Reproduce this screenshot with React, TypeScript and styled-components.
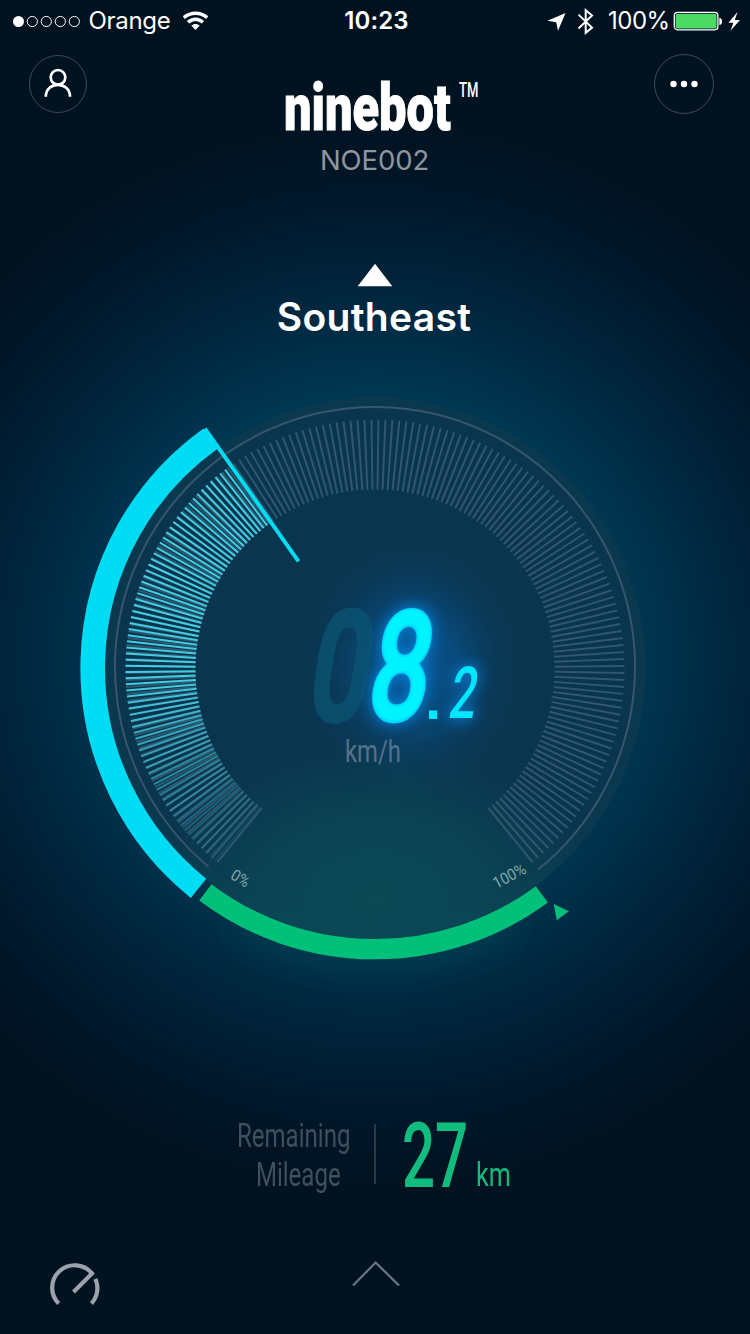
import React from "react";
import styled, { createGlobalStyle } from "styled-components";

const GlobalStyle = createGlobalStyle`
  body {
    margin: 0;
    background: #001220;
  }
  * {
    box-sizing: border-box;
  }
`;

const ui = `Inter, "Liberation Sans", sans-serif`;
const din = `Roboto, "Liberation Sans", sans-serif`;

const Screen = styled.main`
  width: 750px;
  height: 1334px;
  overflow: hidden;
  display: flex;
  flex-direction: column;
  color: #fff;
  font-family: ${ui};
  background: radial-gradient(
    circle 540px at 375px 655px,
    #003f5c 0,
    #003a55 45%,
    #00304a 56%,
    #00243b 69%,
    #001a2e 82%,
    #001424 93%,
    #001220 100%
  );
`;

const StatusBar = styled.header`
  height: 40px;
  flex: none;
  display: grid;
  grid-template-columns: 1fr auto 1fr;
  align-items: center;
  padding: 0 9px 0 12px;
  font-size: 24px;
  line-height: 42px;
`;

const StatusGroup = styled.div<{ $end?: boolean }>`
  display: flex;
  align-items: center;
  justify-content: ${(p) => (p.$end ? "flex-end" : "flex-start")};
  height: 40px;
`;

const Clock = styled.time`
  font-weight: 600;
  letter-spacing: 0.1px;
`;

const StatusText = styled.span<{ $w: number; $ml: number; $spacing: number }>`
  width: ${(p) => p.$w}px;
  margin-left: ${(p) => p.$ml}px;
  letter-spacing: ${(p) => p.$spacing}px;
  white-space: nowrap;
  flex: none;
`;

const Glyph = styled.svg<{ $ml?: number }>`
  display: block;
  flex: none;
  margin-left: ${(p) => p.$ml ?? 0}px;
`;

const Header = styled.div`
  height: 144px;
  flex: none;
  display: flex;
  justify-content: space-between;
  align-items: flex-start;
  padding: 14px 36px 0 28px;
`;

const RoundButton = styled.button<{ $size: number; $inset?: number }>`
  width: ${(p) => p.$size}px;
  height: ${(p) => p.$size}px;
  margin: ${(p) => p.$inset ?? 0}px;
  padding: 0;
  border: 1.5px solid #3e4b57;
  border-radius: 50%;
  background: none;
  display: flex;
  align-items: center;
  justify-content: center;
`;

const Brand = styled.div`
  display: flex;
  flex-direction: column;
  align-items: center;
  margin-left: 6px;
`;

const Device = styled.div`
  margin: 3px 0 0 1px;
  font-size: 27.5px;
  line-height: 34px;
  letter-spacing: -0.1px;
  color: #8f969f;
  white-space: nowrap;
`;

const Compass = styled.section`
  height: 186px;
  flex: none;
  display: flex;
  flex-direction: column;
  align-items: center;
  padding-top: 79px;
`;

const Heading = styled.h1`
  margin: 5px 2px 0 0;
  font-size: 39px;
  line-height: 50px;
  font-weight: 570;
  letter-spacing: 0.3px;
`;

const Dial = styled.svg`
  display: block;
  flex: none;
`;

const Mileage = styled.section`
  height: 100px;
  flex: none;
  margin-top: 106px;
  display: flex;
  align-items: flex-start;
  padding: 20px 0 0 237px;
  font-family: ${din};
`;

const MileageLabel = styled.div`
  width: 114px;
  display: flex;
  flex-direction: column;
  align-items: center;
  padding-top: 1px;
  font-size: 32.5px;
  line-height: 39px;
  color: #414e5b;
`;

const Condensed = styled.span<{ $scale: number; $origin?: string; $shift?: number }>`
  display: block;
  white-space: nowrap;
  margin-left: ${(p) => p.$shift ?? 0}px;
  transform: scaleX(${(p) => p.$scale});
  transform-origin: ${(p) => p.$origin ?? "center"};
`;

const Divider = styled.div`
  width: 2px;
  height: 60px;
  margin: 8px 0 0 23px;
  background: #2b3945;
`;

const Distance = styled.div`
  display: flex;
  color: #10bd7f;
  margin-left: 26px;
`;

const DistanceValue = styled.div`
  width: 74px;
  padding-top: 3px;
  font-size: 91px;
  font-weight: 500;
  line-height: 74px;
`;

const DistanceUnit = styled.div`
  font-size: 34px;
  line-height: 39px;
  padding-top: 39px;
`;

const Footer = styled.footer`
  flex: 1;
  display: flex;
  align-items: flex-start;
  padding: 64px 0 0 49px;
`;

const CX = 375;
const CY = 298;

const polar = (r: number, deg: number, cy = CY) => {
  const a = (deg * Math.PI) / 180;
  return [CX + r * Math.cos(a), cy + r * Math.sin(a)];
};

const arc = (r: number, from: number, to: number, cy = CY) => {
  const [x1, y1] = polar(r, from, cy);
  const [x2, y2] = polar(r, to, cy);
  return `M${x1} ${y1}A${r} ${r} 0 ${to - from > 180 ? 1 : 0} 1 ${x2} ${y2}`;
};

const scaleTicks = Array.from({ length: 176 }, (_, i) => 129.2 + i * 1.609);
const speedTicks = Array.from({ length: 74 }, (_, i) => 129.8 + i * 1.4145);

const Tick = ({ deg, color, opacity = 1 }: { deg: number; color: string; opacity?: number }) => {
  const [x1, y1] = polar(179.5, deg, CY + 1);
  const [x2, y2] = polar(249.5, deg, CY + 1);
  return <line x1={x1} y1={y1} x2={x2} y2={y2} stroke={color} strokeOpacity={opacity} strokeWidth={2} />;
};

const Speedometer = () => (
  <Dial width="750" height="620" viewBox="0 0 750 620">
    <defs>
      <radialGradient id="charge" gradientUnits="userSpaceOnUse" cx="375" cy="530" r="230" gradientTransform="translate(0 159) scale(1 .7)">
        <stop offset="0" stopColor="#0b5058" stopOpacity=".75" />
        <stop offset=".5" stopColor="#0b4e58" stopOpacity=".6" />
        <stop offset="1" stopColor="#0b4858" stopOpacity="0" />
      </radialGradient>
      <radialGradient id="halo">
        <stop offset="0" stopColor="#0763ad" stopOpacity=".8" />
        <stop offset=".4" stopColor="#075da3" stopOpacity=".5" />
        <stop offset=".75" stopColor="#0a4f88" stopOpacity=".15" />
        <stop offset="1" stopColor="#0a4a80" stopOpacity="0" />
      </radialGradient>
      <filter id="glow" x="-60%" y="-60%" width="220%" height="220%">
        <feGaussianBlur stdDeviation="7" />
      </filter>
      <filter id="soften" x="-20%" y="-20%" width="140%" height="140%">
        <feGaussianBlur stdDeviation="1.3" />
      </filter>
      <filter id="ambient" filterUnits="userSpaceOnUse" x="100" y="380" width="550" height="240">
        <feGaussianBlur stdDeviation="16" />
      </filter>
      <clipPath id="face">
        <circle cx={CX} cy={CY} r="271" />
      </clipPath>
    </defs>

    <path d={arc(284, 62, 118)} fill="none" stroke="#04605f" strokeOpacity=".28" strokeWidth="36" filter="url(#ambient)" />
    <circle cx={CX} cy={CY} r="270.5" fill="#0a384f" />
    <circle cx={CX} cy={CY} r="259" fill="#0a354e" />
    <g clipPath="url(#face)">
      <rect x="100" y="330" width="550" height="260" fill="url(#charge)" />
    </g>
    <path d={arc(260, 129.8, 411.2, CY - 1)} fill="none" stroke="#37566e" strokeWidth="2" />
    {scaleTicks.map((d) => (
      <Tick key={d} deg={d} color="#30576f" />
    ))}
    {speedTicks.map((d, i) => (
      <Tick key={d} deg={d} color="#45d6ea" opacity={Math.min(0.95, 0.1 + i * 0.026)} />
    ))}
    <path d={arc(282.3, 128.7, 234.4)} fill="none" stroke="#00dcf4" strokeWidth="24.6" />
    <line x1="204.9" y1="58.6" x2="298.5" y2="191.3" stroke="#00dcf4" strokeWidth="4" />
    <path d={arc(281.2, 53.6, 127.1)} fill="none" stroke="#02bf79" strokeWidth="20.3" />
    <path d="M553.7 534 569 541.3 556.7 550.3Z" fill="#02bf79" />

    <g fontFamily={din} fontSize="16" fill="#83a8ab">
      <text textLength="19" lengthAdjust="spacingAndGlyphs" transform="translate(229.5 508) rotate(32)">0%</text>
      <text textLength="35" lengthAdjust="spacingAndGlyphs" transform="translate(496.5 519) rotate(-28)">100%</text>
    </g>

    <ellipse cx="414" cy="296" rx="112" ry="132" fill="url(#halo)" />
    <g fontFamily={din} fontWeight="500">
      <g transform="translate(306 348) skewX(-9)" fontSize="147" fontWeight="400" strokeLinejoin="round">
        <text textLength="58" lengthAdjust="spacingAndGlyphs" fill="#0b5574" stroke="#0b5574" strokeWidth="9" opacity=".75">0</text>
        <text x="59.5" textLength="58" lengthAdjust="spacingAndGlyphs" fill="#0096ff" stroke="#0096ff" strokeWidth="12" filter="url(#glow)" opacity=".65">8</text>
        <text x="59.5" textLength="58" lengthAdjust="spacingAndGlyphs" fill="#04ccfa" stroke="#04ccfa" strokeWidth="8">8</text>
        <text x="59.5" textLength="58" lengthAdjust="spacingAndGlyphs" fill="#00f4ff" stroke="#00f4ff" strokeWidth="4.5" filter="url(#soften)">8</text>
      </g>
      <g transform="translate(447 348) skewX(-9)" fontSize="72">
        <text textLength="27" lengthAdjust="spacingAndGlyphs" fill="#0096ff" stroke="#0096ff" strokeWidth="5" filter="url(#glow)" opacity=".6">2</text>
        <text textLength="27" lengthAdjust="spacingAndGlyphs" fill="#00e6ff">2</text>
      </g>
      <text x="425" y="348.7" fontFamily="Liberation Sans, sans-serif" fontWeight="700" fontSize="58" fill="#00e6ff">.</text>
    </g>
    <text x="345" y="392" fontFamily={din} fontSize="32" textLength="56" lengthAdjust="spacingAndGlyphs" fill="#54728a">km/h</text>
  </Dial>
);

export default function App() {
  return (
    <>
      <GlobalStyle />
      <Screen>
        <StatusBar>
          <StatusGroup>
            <Glyph width="70" height="40" viewBox="0 0 70 40" fill="none" stroke="#fff">
              <circle cx="6.5" cy="20.5" r="5.5" fill="#fff" stroke="none" />
              {[20.3, 34.3, 48.3, 62.3].map((x) => (
                <circle key={x} cx={x} cy="20.5" r="5.1" />
              ))}
            </Glyph>
            <StatusText $w={94} $ml={6.5} $spacing={-0.3}>Orange</StatusText>
            <Glyph width="26" height="40" viewBox="0 0 26 40" fill="none" stroke="#fff" strokeWidth="3.4">
              <path d="M.8 16.6C7.5 10.7 17.5 10.7 24.2 16.6" />
              <path d="M5 21.3C9.5 17.2 15.5 17.2 20 21.3" />
              <path d="M12.5 29 8.3 24.6C10.7 22.4 14.3 22.4 16.7 24.6Z" fill="#fff" stroke="none" />
            </Glyph>
          </StatusGroup>
          <Clock>10:23</Clock>
          <StatusGroup $end>
            <Glyph width="20" height="40" viewBox="0 0 20 40" fill="#fff">
              <path d="M19.5 12 1.5 19.7 10.2 21.3 12 29.8Z" />
            </Glyph>
            <Glyph $ml={11} width="18" height="40" viewBox="0 0 18 40" fill="none" stroke="#fff" strokeWidth="2">
              <path d="M1.5 13.6 15 26.6 8.7 31.8V9.2L15 14.6 1.5 27.4" />
            </Glyph>
            <StatusText $w={61} $ml={13} $spacing={-0.5}>100%</StatusText>
            <Glyph $ml={4} width="68" height="40" viewBox="0 0 68 40">
              <rect x="1.3" y="11.4" width="43.6" height="17.4" rx="3.2" fill="none" stroke="#fff" strokeWidth="1.3" />
              <rect x="2.7" y="12.8" width="40.8" height="14.6" rx="1.6" fill="#4cd964" />
              <path d="M46.4 16.7C50 17.3 50 23.5 46.4 24.1Z" fill="#fff" />
              <path d="M64.5 11 55.4 21.8H60.4L57.5 29.8 67 18.9H61.8Z" fill="#fff" />
            </Glyph>
          </StatusGroup>
        </StatusBar>

        <Header>
          <RoundButton $size={58} $inset={1} aria-label="Profile">
            <Glyph width="32" height="32" viewBox="0 0 32 32" fill="none" stroke="#fff" strokeWidth="2.7">
              <circle cx="16" cy="9.3" r="7.3" />
              <path d="M3.8 28.8C3.8 12.9 28 12.9 28 28.8" />
            </Glyph>
          </RoundButton>
          <Brand>
            <Glyph width="220" height="86" viewBox="0 -20 220 86" fill="#fff" fontFamily={din}>
              <text transform="translate(20 55.5) scale(.745 1)" fontSize="65.5" fontWeight="900" stroke="#fff" strokeWidth="1">ninebot</text>
              <text transform="translate(195 23) scale(.67 1)" fontSize="19.5" fontWeight="500">TM</text>
            </Glyph>
            <Device>NOE002</Device>
          </Brand>
          <RoundButton $size={60} aria-label="More">
            <Glyph width="30" height="8" viewBox="0 0 30 8" fill="#fff">
              <circle cx="4.5" cy="4" r="3.2" />
              <circle cx="15" cy="4" r="3.2" />
              <circle cx="25.5" cy="4" r="3.2" />
            </Glyph>
          </RoundButton>
        </Header>

        <Compass>
          <Glyph width="36" height="24" viewBox="0 0 36 24" fill="#fff">
            <path d="M18 .7 35.3 23.3H.7Z" />
          </Glyph>
          <Heading>Southeast</Heading>
        </Compass>

        <Speedometer />

        <Mileage>
          <MileageLabel>
            <Condensed $scale={0.74}>Remaining</Condensed>
            <Condensed $scale={0.74} $shift={8}>Mileage</Condensed>
          </MileageLabel>
          <Divider />
          <Distance>
            <DistanceValue>
              <Condensed $scale={0.64} $origin="left">27</Condensed>
            </DistanceValue>
            <DistanceUnit>
              <Condensed $scale={0.74} $origin="left">km</Condensed>
            </DistanceUnit>
          </Distance>
        </Mileage>

        <Footer>
          <Glyph width="52" height="48" viewBox="0 -1 52 48" fill="none" stroke="#9aa3ad" strokeWidth="4.2">
            <path d="M9.6 42.5A22.5 22.5 0 1 1 43 12.4L24.5 31" />
            <path d="M46.3 17.8A22.5 22.5 0 0 1 42.4 42.5" />
          </Glyph>
          <Glyph $ml={250} width="50" height="28" viewBox="0 0 50 28" fill="none" stroke="#687683" strokeWidth="2.2">
            <path d="M2 25.5 24.7 2.5 48 25.5" />
          </Glyph>
        </Footer>
      </Screen>
    </>
  );
}
